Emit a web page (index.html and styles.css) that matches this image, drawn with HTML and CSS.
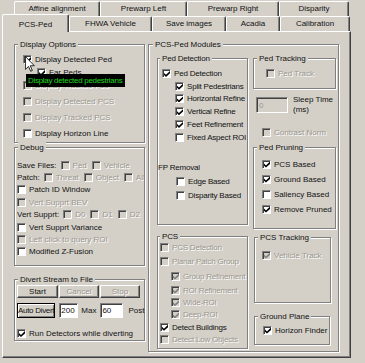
FILE: index.html
```html
<!DOCTYPE html>
<html lang="en">
<head>
    <meta charset="UTF-8">
    <title>PCS-Ped</title>
    <link rel="stylesheet" href="styles.css">
</head>
<body>
    <div class="dialog">
        <div class="tabrow back">
            <div class="tab">Affine alignment</div>
            <div class="tab">Prewarp Left</div>
            <div class="tab">Prewarp Right</div>
            <div class="tab">Disparity</div>
        </div>
        <div class="tabrow front">
            <div class="tab active">PCS-Ped</div>
            <div class="tab">FHWA Vehicle</div>
            <div class="tab">Save images</div>
            <div class="tab">Acadia</div>
            <div class="tab">Calibration</div>
        </div>

        <div class="panel">
            <div class="col-left">
                <div class="group opts">
                    <div class="legend">Display Options</div>
                    <div class="row"><span class="cb on"></span>Display Detected Ped</div>
                    <div class="row sub"><span class="cb on"></span>Far Peds</div>
                    <div class="row dis"><span class="cb"></span>Display Tracked Ped</div>
                    <div class="row dis gap"><span class="cb"></span>Display Detected PCS</div>
                    <div class="row dis gap"><span class="cb"></span>Display Tracked PCS</div>
                    <div class="row gap"><span class="cb"></span>Display Horizon Line</div>
                </div>

                <div class="group debug">
                    <div class="legend">Debug</div>
                    <div class="row"><span class="lbl">Save Files:</span><span class="item dis"><span class="cb"></span>Ped</span><span class="item dis"><span class="cb"></span>Vehicle</span></div>
                    <div class="row"><span class="lbl">Patch:</span><span class="item dis"><span class="cb"></span>Threat</span><span class="item dis"><span class="cb"></span>Object</span><span class="item dis"><span class="cb"></span>All</span></div>
                    <div class="row"><span class="cb"></span>Patch ID Window</div>
                    <div class="row dis"><span class="cb"></span>Vert Supprt BEV</div>
                    <div class="row"><span class="lbl">Vert Supprt:</span><span class="item dis"><span class="cb"></span>D0</span><span class="item dis"><span class="cb"></span>D1</span><span class="item dis"><span class="cb"></span>D2</span></div>
                    <div class="row"><span class="cb"></span>Vert Supprt Variance</div>
                    <div class="row dis"><span class="cb"></span>Left click to query ROI</div>
                    <div class="row"><span class="cb"></span>Modified Z-Fusion</div>
                </div>

                <div class="group divert">
                    <div class="legend">Divert Stream to File</div>
                    <div class="btnrow">
                        <button class="btn">Start</button>
                        <button class="btn" disabled>Cancel</button>
                        <button class="btn" disabled>Stop</button>
                    </div>
                    <div class="btnrow second">
                        <button class="btn default">Auto Divert</button>
                        <input class="field" value="200">
                        <span class="txt">Max</span>
                        <input class="field wide" value="60">
                        <span class="txt post">Post</span>
                    </div>
                    <div class="row"><span class="cb on"></span>Run Detectors while diverting</div>
                </div>
            </div>

            <div class="group modules">
                <div class="legend">PCS-Ped Modules</div>
                <div class="mod-cols">
                    <div class="mod-left">
                        <div class="group peddet">
                            <div class="legend">Ped Detection</div>
                            <div class="row"><span class="cb on"></span>Ped Detection</div>
                            <div class="row sub"><span class="cb on"></span>Split Pedestrians</div>
                            <div class="row sub"><span class="cb on"></span>Horizontal Refine</div>
                            <div class="row sub"><span class="cb on"></span>Vertical Refine</div>
                            <div class="row sub"><span class="cb on"></span>Feet Refinement</div>
                            <div class="row sub"><span class="cb"></span>Fixed Aspect ROI</div>
                            <div class="fp">FP Removal</div>
                            <div class="row sub fp-row"><span class="cb"></span>Edge Based</div>
                            <div class="row sub fp-row"><span class="cb"></span>Disparity Based</div>
                        </div>

                        <div class="group pcs">
                            <div class="legend">PCS</div>
                            <div class="row dis"><span class="cb"></span>PCS Detection</div>
                            <div class="row dis h15"><span class="cb"></span>Planar Patch Group</div>
                            <div class="row dis sub h15"><span class="cb on"></span>Group Refinement</div>
                            <div class="row dis sub"><span class="cb on"></span>ROI Refinement</div>
                            <div class="row dis sub h12"><span class="cb on"></span>Wide-ROI</div>
                            <div class="row dis sub h12"><span class="cb on"></span>Deep-ROI</div>
                            <div class="row h12"><span class="cb on"></span>Detect Buildings</div>
                            <div class="row dis h12"><span class="cb"></span>Detect Low Objects</div>
                        </div>
                    </div>

                    <div class="mod-right">
                        <div class="group pedtrack">
                            <div class="legend">Ped Tracking</div>
                            <div class="row dis"><span class="cb"></span>Ped Track</div>
                        </div>
                        <div class="sleep">
                            <input class="field" value="0" disabled>
                            <span class="sleep-label">Sleep Time<br>(ms)</span>
                        </div>
                        <div class="row dis contrast"><span class="cb"></span>Contrast Norm</div>

                        <div class="group pruning">
                            <div class="legend">Ped Pruning</div>
                            <div class="row"><span class="cb on"></span>PCS Based</div>
                            <div class="row"><span class="cb on"></span>Ground Based</div>
                            <div class="row"><span class="cb"></span>Saliency Based</div>
                            <div class="row"><span class="cb on"></span>Remove Pruned</div>
                        </div>

                        <div class="group pcstrack">
                            <div class="legend">PCS Tracking</div>
                            <div class="row dis"><span class="cb on"></span>Vehicle Track</div>
                        </div>

                        <div class="group ground">
                            <div class="legend">Ground Plane</div>
                            <div class="row"><span class="cb on"></span>Horizon Finder</div>
                        </div>
                    </div>
                </div>
            </div>
        </div>

        <div class="tooltip">Display detected pedestrians</div>
        <svg class="cursor" viewBox="0 0 12 19" width="10" height="16">
            <path d="M0.5 0.5 L0.5 16 L4.2 12.4 L6.8 18.2 L8.8 17.3 L6.3 11.6 L11.2 11.6 Z" fill="#fff" stroke="#000" stroke-width="1"/>
        </svg>
    </div>
</body>
</html>
```

FILE: styles.css
```css
body {
    margin: 0;
    background-color: #d4d0c8;
    font-family: "Liberation Sans", Arial, sans-serif;
    font-size: 8px;
    color: #111;
}
.dialog {
    position: relative;
    width: 365px;
    height: 363px;
    overflow: hidden;
}

/* tabs */
.tabrow {
    display: flex;
    height: 15px;
}
.tabrow.back {
    margin-left: 14px;
    padding-top: 1px;
}
.tabrow.front {
    margin-left: 2px;
}
.tab {
    box-sizing: border-box;
    height: 15px;
    line-height: 14px;
    text-align: center;
    white-space: nowrap;
    border-top: 1px solid #fff;
    border-left: 1px solid #fff;
    border-right: 1px solid #404040;
    box-shadow: inset -1px 0 #808080;
    border-radius: 2px 2px 0 0;
    background-color: #d4d0c8;
}
.back .tab:nth-child(1) { width: 86px; }
.back .tab:nth-child(2) { width: 87px; }
.back .tab:nth-child(3) { width: 92px; }
.back .tab:nth-child(4) { width: 70px; }
.front .tab:nth-child(1) { width: 67px; }
.front .tab:nth-child(2) { width: 83px; }
.front .tab:nth-child(3) { width: 74px; }
.front .tab:nth-child(4) { width: 54px; }
.front .tab:nth-child(5) { width: 70px; }
.tab.active {
    position: relative;
    z-index: 1;
    height: 18px;
    margin-top: -2px;
    line-height: 19px;
}

/* page */
.panel {
    box-sizing: border-box;
    display: flex;
    gap: 3px;
    width: 349px;
    height: 327px;
    margin-left: 2px;
    padding: 12px 0 0 11px;
    border: 1px solid;
    border-color: #fff #404040 #404040 #fff;
    box-shadow: inset -1px -1px #808080;
}
.col-left {
    width: 131px;
}

/* group boxes */
.group {
    box-sizing: border-box;
    border: 1px solid #808080;
    box-shadow: inset 1px 1px #fff, 1px 1px #fff;
}
.legend {
    width: fit-content;
    height: 11px;
    line-height: 11px;
    margin: -6px 0 0 3px;
    padding: 0 2px;
    background-color: #d4d0c8;
    white-space: nowrap;
}

/* checkbox rows */
.row {
    display: flex;
    align-items: center;
    height: 13px;
    white-space: nowrap;
    overflow: hidden;
}
.cb {
    position: relative;
    box-sizing: border-box;
    flex: none;
    width: 9px;
    height: 9px;
    margin-right: 3px;
    background-color: #fff;
    border: 1px solid;
    border-color: #808080 #fff #fff #808080;
    box-shadow: inset 1px 1px #404040;
}
.cb.on::after {
    content: "";
    position: absolute;
    left: 1px;
    top: 1px;
    width: 6px;
    height: 6px;
    background-color: #000;
    clip-path: polygon(0 35%, 33% 65%, 100% 0, 100% 40%, 33% 100%, 0 70%);
}
.dis {
    color: #9b978f;
    text-shadow: 1px 1px #fff;
}
.dis .cb {
    background-color: #d4d0c8;
}
.dis .cb.on::after {
    background-color: #808080;
}
.lbl {
    margin-right: 4px;
    color: #111;
    text-shadow: none;
}
.item {
    display: flex;
    align-items: center;
    margin-right: 5px;
}

/* display options */
.opts {
    height: 99px;
    padding-left: 8px;
}
.opts .legend {
    margin-bottom: 3px;
    margin-left: -5px;
}
.opts .sub {
    margin-left: 14px;
}
.opts .gap {
    margin-top: 3px;
}

/* debug */
.debug {
    height: 119px;
    margin-top: 4px;
    padding-left: 2px;
}
.debug .legend {
    margin-bottom: 6px;
    margin-left: 1px;
}
.debug .row {
    height: 12.4px;
}

/* divert */
.divert {
    height: 62px;
    margin-top: 13px;
    padding-left: 2px;
}
.divert .legend {
    margin-left: 1px;
}
.btnrow {
    display: flex;
    align-items: center;
    height: 13px;
    gap: 1px;
}
.btnrow.second {
    height: 15px;
    margin-top: 5px;
    gap: 0;
}
.btn {
    box-sizing: border-box;
    width: 40px;
    height: 13px;
    padding: 0;
    font: inherit;
    color: #111;
    white-space: nowrap;
    background-color: #d4d0c8;
    border: 1px solid;
    border-color: #fff #404040 #404040 #fff;
    box-shadow: inset -1px -1px #808080;
}
.btn:first-child {
    width: 41px;
}
.btn:disabled {
    color: #9b978f;
    text-shadow: 1px 1px #fff;
}
.btn.default {
    height: 15px;
    letter-spacing: -0.3px;
    border-color: #000;
    box-shadow: inset 1px 1px #fff, inset -1px -1px #808080;
}
.field {
    box-sizing: border-box;
    width: 19px;
    height: 15px;
    margin: 0 0 0 4px;
    padding: 0 1px;
    font: inherit;
    color: #111;
    background-color: #fff;
    border: 1px solid;
    border-color: #808080 #fff #fff #808080;
    box-shadow: inset 1px 1px #404040;
    outline: none;
}
.field.wide {
    width: 23px;
}
.field:disabled {
    background-color: #d4d0c8;
    color: #9b978f;
}
.txt {
    margin-left: 3px;
}
.txt.post {
    margin-left: 5px;
}
.divert .row {
    margin-top: 9px;
}

/* modules */
.modules {
    width: 191px;
    height: 308px;
}
.modules .legend {
    margin-left: 4px;
}
.mod-cols {
    display: flex;
    gap: 5px;
    padding: 8px 0 0 8px;
}
.mod-left {
    width: 91px;
    letter-spacing: -0.2px;
}
.mod-right {
    width: 83px;
}

.peddet {
    height: 167px;
    padding-left: 4px;
}
.peddet .legend {
    margin-left: -2px;
    margin-bottom: 3px;
}
.peddet .row {
    height: 12.75px;
}
.peddet .sub {
    margin-left: 13px;
}
.fp {
    height: 14px;
    line-height: 14px;
    margin: 17px 0 0 -4px;
}
.peddet .fp-row {
    height: 14px;
    margin-left: 14px;
}

.pcs {
    height: 113px;
    margin-top: 11px;
    padding-left: 2px;
}
.pcs .legend {
    margin-left: 0;
    margin-bottom: -1.5px;
}
.pcs .sub {
    margin-left: 11px;
}
.row.h15 {
    height: 15px;
}
.row.h12 {
    height: 12.3px;
}

.pedtrack {
    height: 31px;
    padding-left: 12px;
}
.pedtrack .legend {
    margin-left: -9px;
    margin-bottom: 3px;
}
.pedtrack .row {
    height: 12px;
}
.sleep {
    display: flex;
    margin-top: 8px;
}
.sleep .field {
    width: 32px;
    height: 16px;
    margin-left: 3px;
    padding-left: 2px;
}
.sleep-label {
    margin: -2px 0 0 5px;
    line-height: 10px;
}
.contrast {
    height: 12px;
    margin: 11px 0 0 9px;
}

.pruning {
    height: 82px;
    margin-top: 9px;
    padding-left: 8px;
}
.pruning .legend {
    margin-left: -5px;
    margin-bottom: 3.5px;
}
.pruning .row {
    height: 15px;
}

.pcstrack {
    width: 77px;
    height: 66px;
    margin: 8px 0 0 1px;
    padding-left: 7px;
}
.pcstrack .legend {
    margin-left: -4px;
    margin-bottom: 6px;
}
.pcstrack .row {
    height: 12px;
}

.ground {
    width: 76px;
    height: 29px;
    margin: 13px 0 0 1px;
    padding-left: 8px;
}
.ground .legend {
    margin-left: -5px;
    margin-bottom: 2px;
}
.ground .row {
    height: 12px;
}

/* hover overlays */
.tooltip {
    position: absolute;
    left: 26px;
    top: 74px;
    height: 13px;
    line-height: 13px;
    padding: 0 3px 0 2px;
    letter-spacing: -0.3px;
    background-color: #000;
    color: #1ed81e;
    white-space: nowrap;
}
.cursor {
    position: absolute;
    left: 25px;
    top: 56px;
}
```
